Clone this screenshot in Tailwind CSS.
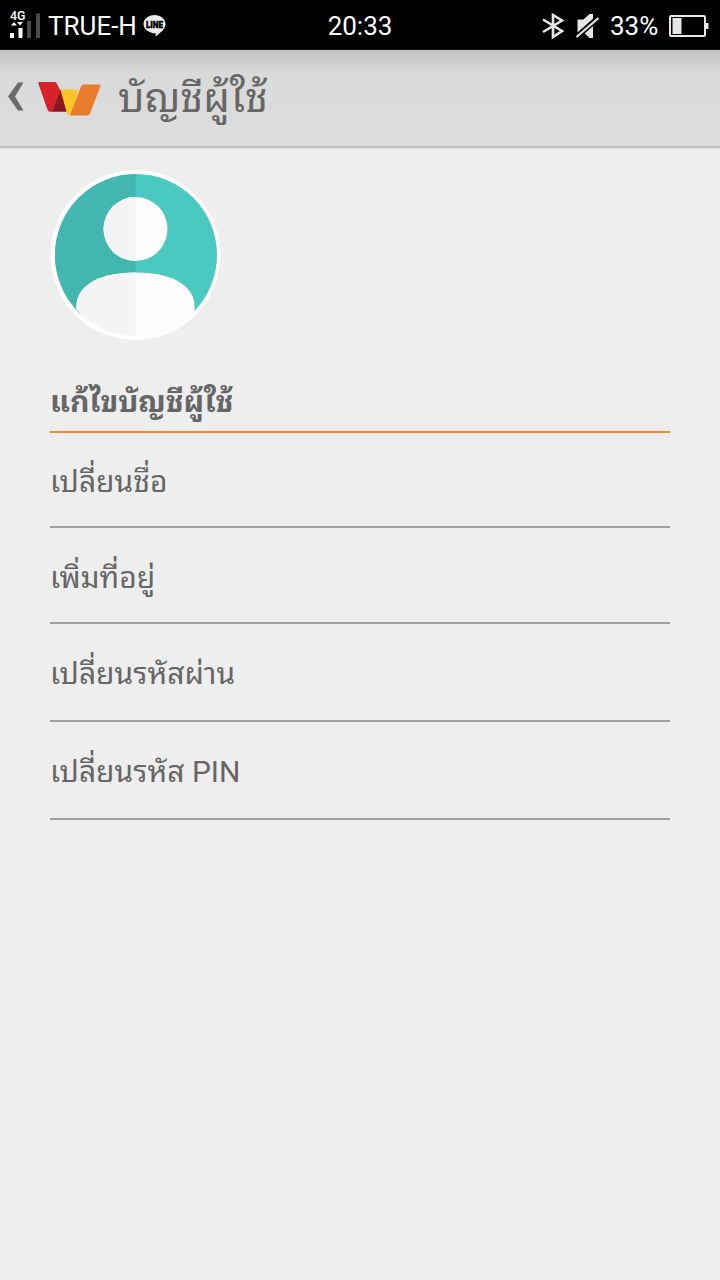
<!DOCTYPE html>
<html lang="th">
<head>
    <meta charset="UTF-8">
    <meta name="viewport" content="width=device-width, initial-scale=1.0">
    <title>บัญชีผู้ใช้</title>
    <script src="https://cdn.jsdelivr.net/npm/@tailwindcss/browser@4"></script>
</head>
<body class="bg-[#eeeeee] min-h-screen text-[#666666] font-[Roboto,'Droid_Sans_Thai','Noto_Sans_Thai_Looped','Noto_Looped_Thai','Loma','Garuda','Waree','Tlwg_Typo','Noto_Serif_Thai','FreeSerif',sans-serif]">

    <!-- Status bar -->
    <div class="h-[50px] bg-black text-white grid grid-cols-3 items-center text-[26px] leading-[52px]">
        <div class="flex items-center">
            <svg class="w-[48px] h-[50px]" viewBox="0 0 48 50">
                <text x="10" y="19" font-size="12" font-weight="500" fill="#fff" textLength="15.5" lengthAdjust="spacingAndGlyphs">4G</text>
                <path d="M11 24.500l3-3.500 3 3.500zM17 21h6l-3 3.500z" fill="#fff"/>
                <path d="M10 32h4v5h-4zM18.500 27h4v10h-4z" fill="#fff"/>
                <path d="M27 20h4v17h-4zM36 12.500h4V37h-4z" fill="#4c4c4c"/>
            </svg>
            <span class="w-[95px] whitespace-nowrap">TRUE-H</span>
            <svg class="w-[24px] h-[50px]" viewBox="0 0 24 50">
                <path d="M11.500 14C17.600 14 22.500 18 22.500 23c0 4-3 7-8.500 11.500-.8.600-1.400 1.200-1.400.4l.2-2.400C5.500 32 .5 28 .5 23 .5 18 5.400 14 11.500 14z" fill="#ececec"/>
                <text x="3" y="26.500" font-size="9" font-weight="900" fill="#000" stroke="#000" stroke-width=".4" textLength="17" lengthAdjust="spacingAndGlyphs">LINE</text>
            </svg>
        </div>
        <div class="text-center">20:33</div>
        <div class="flex items-center justify-end pr-[10px]">
            <svg class="w-[24px] h-[50px]" viewBox="0 0 24 50" fill="none" stroke="#e6e6e6" stroke-width="2.600">
                <path d="M2 18.500l19 11.500-9 6V14l9 5.500L2 31"/>
            </svg>
            <svg class="w-[24px] h-[50px] ml-[10px]" viewBox="0 0 24 50">
                <path d="M2.500 18.500h6l6-5.500h3.500v24h-3.500l-6-5.500h-6z" fill="#e6e6e6"/>
                <path d="M0 37.500L24 16" stroke="#000" stroke-width="5.500"/>
                <path d="M1.500 36L23.500 17" stroke="#e6e6e6" stroke-width="2.200"/>
            </svg>
            <span class="ml-[11px] w-[48px]">33%</span>
            <svg class="w-[41px] h-[50px] ml-[11px]" viewBox="0 0 41 50">
                <rect x="1" y="15" width="35" height="20" rx="1" fill="none" stroke="#e6e6e6" stroke-width="2"/>
                <path d="M3.500 17h9v16h-9zM37 22h2.500v6H37z" fill="#e6e6e6"/>
            </svg>
        </div>
    </div>

    <!-- Action bar -->
    <div class="h-[98px] bg-linear-to-b from-[#c2c2c2] via-[#dadada] via-25% to-[#dddddd] border-b-2 border-[#bfbfbf] shadow-[0_1px_2px_#d8d8d8] flex items-center">
        <svg class="w-[110px] h-[96px]" viewBox="0 50 110 96">
            <path d="M18 82.500h5.500L15 96.500l8.500 14H18L8 96.500z" fill="#6b6b6b"/>
            <path d="M58 89.500h20L72 115.500h-4z" fill="#f9c623"/>
            <path d="M39.500 82h15q2 0 2.600 2l3.400 7-9 20.700h-2q-1.500-.5-2-2L38.500 84q-.6-2 1-2z" fill="#d8222a"/>
            <path d="M60.500 90l6 21.700h-15z" fill="#8b1720"/>
            <path d="M83 84.500h16.500q1.500 0 1 1.500L90 113.500q-1 2-3 2H70l11-29q.8-2 2-2z" fill="#e87b2c"/>
        </svg>
        <h1 class="ml-[8px] text-[41px] leading-none">บัญชีผู้ใช้</h1>
    </div>

    <div class="px-[50px] pt-[22px]">
        <svg class="w-[170px] h-[170px]" viewBox="0 0 170 170">
            <defs>
                <clipPath id="face"><circle cx="86" cy="85" r="81"/></clipPath>
                <clipPath id="half"><path d="M0 0h85.500v170H0z"/></clipPath>
            </defs>
            <circle cx="85.500" cy="85" r="85" fill="#fff"/>
            <circle cx="86" cy="85" r="81" fill="#49c9c2"/>
            <circle cx="86" cy="85" r="81" fill="#41b7b0" clip-path="url(#half)"/>
            <path d="M26.500 139v-3C26.500 118 45 102.500 85.500 102.500S144.500 118 144.500 136v5q-20 26-59 26-38 0-59-28z" fill="#fdfdfd"/>
            <circle cx="85.500" cy="59" r="32" fill="#fdfdfd"/>
            <g clip-path="url(#half)" fill="#f4f4f4">
                <circle cx="85.500" cy="59" r="32"/>
                <path d="M26.500 139v-3C26.500 118 45 102.500 87 102.500V166q-38 0-60.500-27z"/>
            </g>
        </svg>

        <h2 class="h-[93px] pt-[44px] text-[30px] leading-[36px] font-bold border-b-2 border-[#ee8a22]">แก้ไขบัญชีผู้ใช้</h2>
        <ul class="text-[30px] leading-[36px]">
            <li class="h-[95px] pt-[31px] border-b-2 border-[#a0a0a0]">เปลี่ยนชื่อ</li>
            <li class="h-[96px] pt-[32px] border-b-2 border-[#a0a0a0]">เพิ่มที่อยู่</li>
            <li class="h-[98px] pt-[32px] border-b-2 border-[#a0a0a0]">เปลี่ยนรหัสผ่าน</li>
            <li class="h-[98px] pt-[32px] border-b-2 border-[#a0a0a0]">เปลี่ยนรหัส PIN</li>
        </ul>
    </div>

</body>
</html>
